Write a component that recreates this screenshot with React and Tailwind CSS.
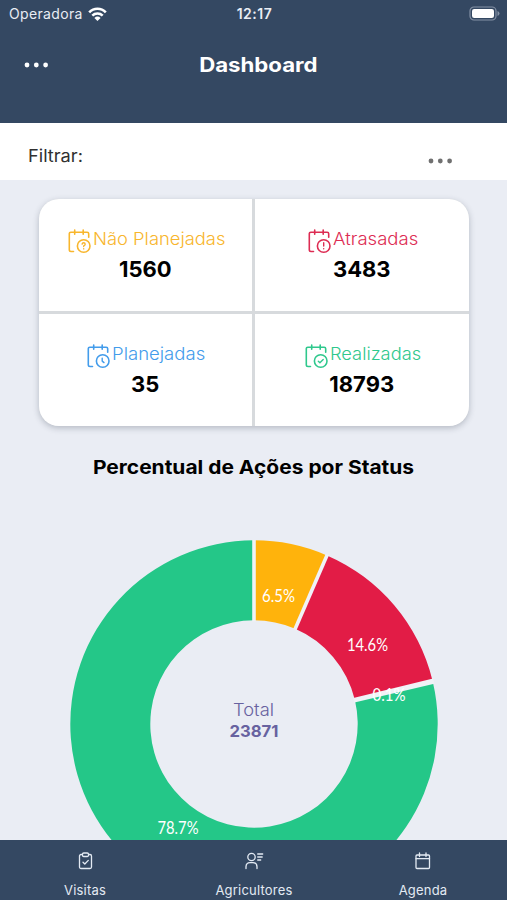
const CENTER = { x: 254, y: 184 };
const OUTER = 183.7;
const INNER = 103.7;

const slices = [
  { id: 'unplanned', percent: 6.5, color: '#ffb30c', label: '6.5%', x: 278.5, y: 62 },
  { id: 'late', percent: 14.7, color: '#e21c46', label: '14.6%', x: 367.5, y: 111 },
  { id: 'planned', percent: 0.15, color: '#eef0f5', label: '0.1%', x: 389, y: 160.5 },
  { id: 'done', percent: 78.65, color: '#24c788', label: '78.7%', x: 178, y: 293.5 },
];

const polar = (radius, percent) => {
  const angle = (percent / 100) * Math.PI * 2;
  return [CENTER.x + radius * Math.sin(angle), CENTER.y - radius * Math.cos(angle)];
};

const slicePath = (start, end) => {
  const large = end - start > 50 ? 1 : 0;
  const [x1, y1] = polar(OUTER, start);
  const [x2, y2] = polar(OUTER, end);
  const [x3, y3] = polar(INNER, end);
  const [x4, y4] = polar(INNER, start);
  return `M${x1} ${y1}A${OUTER} ${OUTER} 0 ${large} 1 ${x2} ${y2}L${x3} ${y3}A${INNER} ${INNER} 0 ${large} 0 ${x4} ${y4}Z`;
};

const StatusBar = () => (
  <div className="grid grid-cols-3 h-[26px] pl-[9px] pr-[7px] items-center text-[#e9edf4]">
    <div className="flex items-center gap-[5px] pt-0.5">
      <span className="text-[14px] leading-none tracking-[0.35px]">Operadora</span>
      <svg width="19" height="15" viewBox="0 0 19 15" fill="none" stroke="#fff" strokeWidth="2.6">
        <path d="M1.2 5.3C5.8 .6 13.2 .6 17.8 5.3" />
        <path d="M4.3 8.6C7.2 5.8 11.8 5.8 14.7 8.6" />
        <path d="M6.4 10.9Q9.5 8.2 12.6 10.9L9.5 14Z" fill="#fff" stroke="none" />
      </svg>
    </div>
    <span className="text-center text-[14px] leading-none font-semibold tracking-[0.5px] pt-0.5">12:17</span>
    <svg className="justify-self-end" width="31" height="15" viewBox="0 0 31 15" fill="none">
      <rect x="1" y="1" width="26" height="13" rx="4" stroke="#8491a5" strokeWidth="1.2" />
      <rect x="3" y="3" width="22" height="9" rx="2.2" fill="#fff" />
      <path d="M28.5 5v5q2-.8 2-2.500t-2-2.500Z" fill="#8491a5" />
    </svg>
  </div>
);

const Dots = ({ className }) => (
  <svg className={className} width="25" height="6" viewBox="0 0 25 6" fill="currentColor">
    <circle cx="3" cy="3" r="2.400" />
    <circle cx="12.300" cy="3" r="2.400" />
    <circle cx="21.600" cy="3" r="2.400" />
  </svg>
);

const marks = {
  question: <path d="M13.600 13.800Q13.800 12.500 15.200 12.500T16.700 13.900Q16.700 14.900 15.200 15.500V16.200M15.200 18.400V18.600" />,
  alert: <path d="M15.200 12.400V15.800M15.200 18.300V18.500" />,
  clock: <path d="M14.700 12.800V15.800L16.500 17.300" />,
  check: <path d="M12.800 15.900L14.400 17.400L17.700 14.100" />,
};

const CalendarIcon = ({ mark }) => (
  <svg width="23" height="25" viewBox="0 0 23 25" fill="none" stroke="currentColor" strokeWidth="1.600" strokeLinecap="round" strokeLinejoin="round">
    <path d="M5.500 22.500H3Q1.300 22.500 1.300 20.800V4.500Q1.300 3.200 2.800 3.200H19.200Q20.700 3.200 20.700 4.700V8.200" />
    <path d="M6.700 1V5.200M15.200 1V5.200" />
    <circle cx="15.700" cy="17" r="6.300" />
    <g transform="translate(.5 1.300)" strokeWidth="1.400">{marks[mark]}</g>
  </svg>
);

const StatCard = ({ mark, label, value, className, labelClass }) => (
  <div className="bg-white flex flex-col items-center pt-[29px]">
    <div className={`flex items-start gap-[2px] h-[26px] pl-[3px] ${className}`}>
      <div className="pt-px"><CalendarIcon mark={mark} /></div>
      <span className={`block whitespace-nowrap text-[17px] leading-[23px] font-light origin-left ${labelClass}`}>
        {label}
      </span>
    </div>
    <span className="text-[22px] leading-[30px] font-bold text-black">{value}</span>
  </div>
);

const StatusChart = () => {
  let total = 0;
  const parts = slices.map((slice) => {
    const start = total;
    total += slice.percent;
    return { ...slice, start, end: total };
  });

  return (
    <svg className="block" width="507" height="368" viewBox="0 0 507 368">
      {parts.map((part) => (
        <path key={part.id} d={slicePath(part.start, part.end)} fill={part.color} />
      ))}
      {parts.map((part) => {
        const [x1, y1] = polar(INNER - 1, part.start);
        const [x2, y2] = polar(OUTER + 1, part.start);
        return <line key={part.id} x1={x1} y1={y1} x2={x2} y2={y2} stroke="#f0f2f7" strokeWidth="3.600" />;
      })}
      <g fill="#fff" fontFamily="Lato, sans-serif" fontSize="17" textAnchor="middle">
        {parts.map((part) => (
          <text key={part.id} x={part.x} y={part.y} textLength={part.label.length > 4 ? 41 : 33} lengthAdjust="spacingAndGlyphs">
            {part.label}
          </text>
        ))}
      </g>
      <g fill="#6762a0" fontFamily="Inter, sans-serif" textAnchor="middle">
        <text x="253.500" y="176" fontSize="17" fontWeight="300" textLength="41" lengthAdjust="spacingAndGlyphs">Total</text>
        <text x="254" y="197" fontSize="16.500" fontWeight="700" textLength="49" lengthAdjust="spacingAndGlyphs">23871</text>
      </g>
    </svg>
  );
};

const NavItem = ({ label, children }) => (
  <div className="flex flex-col items-center pt-3 text-[#e3eaf3]">
    <svg width="20" height="18" viewBox="0 0 20 18" fill="none" stroke="currentColor" strokeWidth="1.300" strokeLinecap="round" strokeLinejoin="round">
      {children}
    </svg>
    <span className="mt-[11px] pl-px text-[13px] leading-[18px] tracking-[0.2px]">{label}</span>
  </div>
);

export default function App() {
  return (
    <div className="w-[507px] h-[900px] overflow-hidden flex flex-col bg-[#eaedf4] font-['Inter',sans-serif]">
      <header className="h-[123px] shrink-0 bg-[#344862]">
        <StatusBar />
        <div className="grid grid-cols-3 items-center h-[77px] px-6 text-white">
          <Dots />
          <h1 className="justify-self-center ml-[9px] text-[20px] font-bold scale-x-[1.11]">Dashboard</h1>
        </div>
      </header>

      <div className="h-[57px] shrink-0 bg-white flex items-center justify-between pl-7 pr-[54px]">
        <span className="text-[17px] leading-none text-[#303030] origin-left scale-x-[1.07] mt-[11px] mb-[2px]">Filtrar:</span>
        <Dots className="text-[#707070] mt-[18px]" />
      </div>

      <main className="flex-1 min-h-0 overflow-hidden pt-[19px]">
        <section className="mx-auto w-[430px] h-[227px] grid grid-cols-2 gap-[3px] bg-[#d7dadd] rounded-[20px] overflow-hidden shadow-[0_2px_6px_rgba(40,50,70,0.28)]">
          <StatCard mark="question" label="Não Planejadas" value="1560" className="text-[#f8b62d]" labelClass="w-[133px] scale-x-[1.08]" />
          <StatCard mark="alert" label="Atrasadas" value="3483" className="text-[#dd2c53]" labelClass="w-[85px] scale-x-[1.09]" />
          <StatCard mark="clock" label="Planejadas" value="35" className="text-[#439ceb]" labelClass="w-[94px] scale-x-[1.09]" />
          <StatCard mark="check" label="Realizadas" value="18793" className="text-[#2fc88d]" labelClass="w-[91px] scale-x-[1.075]" />
        </section>
        <h2 className="mt-[28px] h-[28px] text-center text-[19px] leading-[28px] font-bold text-black scale-x-[1.103]">
          Percentual de Ações por Status
        </h2>
        <div className="mt-[58px]">
          <StatusChart />
        </div>
      </main>

      <nav className="h-[60px] shrink-0 grid grid-cols-3 bg-[#344862]">
        <NavItem label="Visitas">
          <rect x="4.500" y="2.500" width="12" height="14" rx="1.500" />
          <rect x="7.500" y="1" width="6" height="3.500" rx="1.200" fill="#344862" />
          <path d="M8 10.200L9.800 12L13.300 8.400" />
        </NavItem>
        <NavItem label="Agricultores">
          <circle cx="7.500" cy="5" r="3.700" />
          <path d="M2 16.500V14.600Q2.200 10.600 6 10.600H9Q12.800 10.600 13 14.600V16.500" />
          <path d="M13.700 2H18.700M13.700 5H18.200M13.700 8H16.700" />
        </NavItem>
        <NavItem label="Agenda">
          <rect x="3" y="3" width="13.500" height="13.500" rx="1" />
          <path d="M3 6.700H16.500M6.500 1V4.500M13 1V4.500" />
        </NavItem>
      </nav>
    </div>
  );
}
